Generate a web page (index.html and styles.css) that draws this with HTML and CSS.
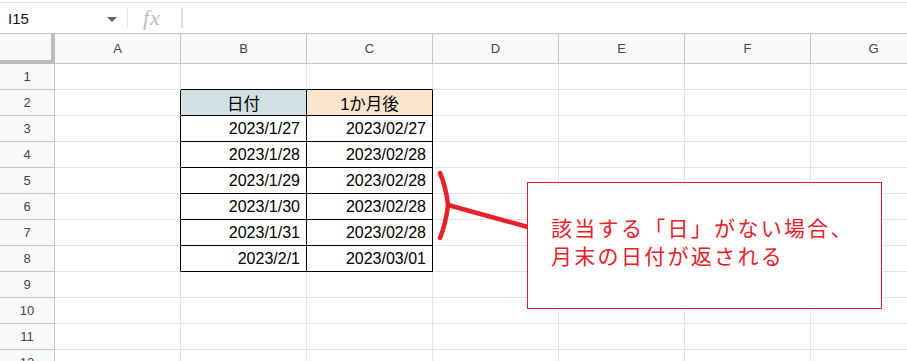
FILE: index.html
```html
<!DOCTYPE html>
<html lang="ja">
<head>
<meta charset="utf-8">
<title>EDATE</title>
<link rel="stylesheet" href="styles.css">
</head>
<body>
<div class="sheet">
  <div class="formula-bar">
    <div class="name-box">
      <span class="cell-ref">I15</span>
      <span class="caret"></span>
    </div>
    <div class="fx-box">
      <span class="fx">fx</span>
    </div>
    <div class="formula-input"></div>
  </div>

  <div class="grid">
    <div class="corner"></div>
    <div class="col-head">A</div>
    <div class="col-head">B</div>
    <div class="col-head">C</div>
    <div class="col-head">D</div>
    <div class="col-head">E</div>
    <div class="col-head">F</div>
    <div class="col-head">G</div>

    <div class="row-head">1</div>
    <div class="cell"></div>
    <div class="cell edge-bottom"></div>
    <div class="cell edge-bottom"></div>
    <div class="cell"></div><div class="cell"></div><div class="cell"></div><div class="cell"></div>

    <div class="row-head">2</div>
    <div class="cell edge-right"></div>
    <div class="cell boxed head-date">日付</div>
    <div class="cell boxed head-month">1か月後</div>
    <div class="cell"></div><div class="cell"></div><div class="cell"></div><div class="cell"></div>

    <div class="row-head">3</div>
    <div class="cell edge-right"></div>
    <div class="cell boxed num">2023/1/27</div>
    <div class="cell boxed num">2023/02/27</div>
    <div class="cell"></div><div class="cell"></div><div class="cell"></div><div class="cell"></div>

    <div class="row-head">4</div>
    <div class="cell edge-right"></div>
    <div class="cell boxed num">2023/1/28</div>
    <div class="cell boxed num">2023/02/28</div>
    <div class="cell"></div><div class="cell"></div><div class="cell"></div><div class="cell"></div>

    <div class="row-head">5</div>
    <div class="cell edge-right"></div>
    <div class="cell boxed num">2023/1/29</div>
    <div class="cell boxed num">2023/02/28</div>
    <div class="cell"></div><div class="cell"></div><div class="cell"></div><div class="cell"></div>

    <div class="row-head">6</div>
    <div class="cell edge-right"></div>
    <div class="cell boxed num">2023/1/30</div>
    <div class="cell boxed num">2023/02/28</div>
    <div class="cell"></div><div class="cell"></div><div class="cell"></div><div class="cell"></div>

    <div class="row-head">7</div>
    <div class="cell edge-right"></div>
    <div class="cell boxed num">2023/1/31</div>
    <div class="cell boxed num">2023/02/28</div>
    <div class="cell"></div><div class="cell"></div><div class="cell"></div><div class="cell"></div>

    <div class="row-head">8</div>
    <div class="cell edge-right"></div>
    <div class="cell boxed num">2023/2/1</div>
    <div class="cell boxed num">2023/03/01</div>
    <div class="cell"></div><div class="cell"></div><div class="cell"></div><div class="cell"></div>

    <div class="row-head">9</div>
    <div class="cell"></div><div class="cell"></div><div class="cell"></div><div class="cell"></div><div class="cell"></div><div class="cell"></div><div class="cell"></div>

    <div class="row-head">10</div>
    <div class="cell"></div><div class="cell"></div><div class="cell"></div><div class="cell"></div><div class="cell"></div><div class="cell"></div><div class="cell"></div>

    <div class="row-head">11</div>
    <div class="cell"></div><div class="cell"></div><div class="cell"></div><div class="cell"></div><div class="cell"></div><div class="cell"></div><div class="cell"></div>

    <div class="row-head">12</div>
    <div class="cell"></div><div class="cell"></div><div class="cell"></div><div class="cell"></div><div class="cell"></div><div class="cell"></div><div class="cell"></div>
  </div>

  <!-- bracket joining rows 5-7 to the callout -->
  <svg class="bracket" width="110" height="90" viewBox="0 0 110 90">
    <path d="M10 8 Q16 22 18 40 Q16 58 10 73" fill="none" stroke="#e8202a" stroke-width="4.5" stroke-linecap="round" stroke-linejoin="round"/>
    <path d="M18 40 L98 62" fill="none" stroke="#e8202a" stroke-width="4.5" stroke-linecap="round"/>
  </svg>

  <div class="callout">
    <p>該当する「日」がない場合、<br>月末の日付が返される</p>
  </div>
</div>
</body>
</html>
```

FILE: styles.css
```css
* {
  box-sizing: border-box;
}

html, body {
  margin: 0;
  padding: 0;
  background: #ffffff;
}

.sheet {
  position: relative;
  width: 907px;
  height: 361px;
  overflow: hidden;
  font-family: "Liberation Sans", Arial, "Noto Sans CJK JP", sans-serif;
}

/* ---------- formula bar ---------- */
.formula-bar {
  display: flex;
  align-items: center;
  height: 32px;
  margin-top: 2px;
  border-top: 1px solid #e3e3e3;
  border-bottom: 1px solid #c4c7c5;
}

.name-box {
  width: 128px;
  height: 20px;
  display: flex;
  align-items: center;
  padding-left: 8px;
  padding-right: 10px;
  border-right: 1px solid #e3e3e3;
}

.cell-ref {
  flex: 1;
  font-size: 15px;
  color: #111;
}

.caret {
  width: 0;
  height: 0;
  margin-top: 2px;
  border-left: 5px solid transparent;
  border-right: 5px solid transparent;
  border-top: 5px solid #5f6368;
}

.fx-box {
  width: 55px;
  height: 20px;
  display: flex;
  align-items: center;
  padding-left: 15px;
  border-right: 2px solid #dadce0;
}

.fx {
  font-family: "Liberation Serif", "DejaVu Serif", serif;
  font-style: italic;
  font-size: 22px;
  line-height: 20px;
  letter-spacing: 1px;
  color: #bdbdbd;
}

.formula-input {
  flex: 1;
}

/* ---------- grid ---------- */
.grid {
  display: grid;
  grid-template-columns: 55px repeat(7, 126px);
  grid-template-rows: 30px repeat(12, 26px);
}

.corner {
  background: #f8f9fa;
  border-right: 4px solid #bdbdbd;
  border-bottom: 4px solid #bdbdbd;
}

.col-head,
.row-head {
  background: #f8f9fa;
  border-right: 1px solid #c4c7c5;
  border-bottom: 1px solid #c4c7c5;
  display: flex;
  align-items: center;
  justify-content: center;
  font-size: 13px;
  color: #444746;
}

.cell {
  border-right: 1px solid #e2e2e3;
  border-bottom: 1px solid #e2e2e3;
  font-size: 16px;
  color: #000;
  display: flex;
  align-items: center;
  white-space: nowrap;
}

.edge-right {
  border-right-color: #000;
}

.edge-bottom {
  border-bottom-color: #000;
}

.boxed {
  border-right-color: #000;
  border-bottom-color: #000;
}

.num {
  justify-content: flex-end;
  padding-right: 6px;
}

.head-date,
.head-month {
  justify-content: center;
  font-size: 16.5px;
  font-family: "Liberation Sans", "Noto Sans CJK JP", sans-serif;
}

.head-date {
  background: #d0e0e3;
}

.head-month {
  background: #fce5cd;
}

/* ---------- annotation ---------- */
.bracket {
  position: absolute;
  left: 430px;
  top: 165px;
}

.callout {
  position: absolute;
  left: 527px;
  top: 182px;
  width: 355px;
  height: 127px;
  padding: 30px 0 0 23px;
  background: #fff;
  border: 1px solid #e0202a;
}

.callout p {
  margin: 0;
  font-family: "Noto Sans CJK JP", sans-serif;
  font-size: 21px;
  line-height: 28px;
  letter-spacing: 2.3px;
  color: #e8202a;
}
```
